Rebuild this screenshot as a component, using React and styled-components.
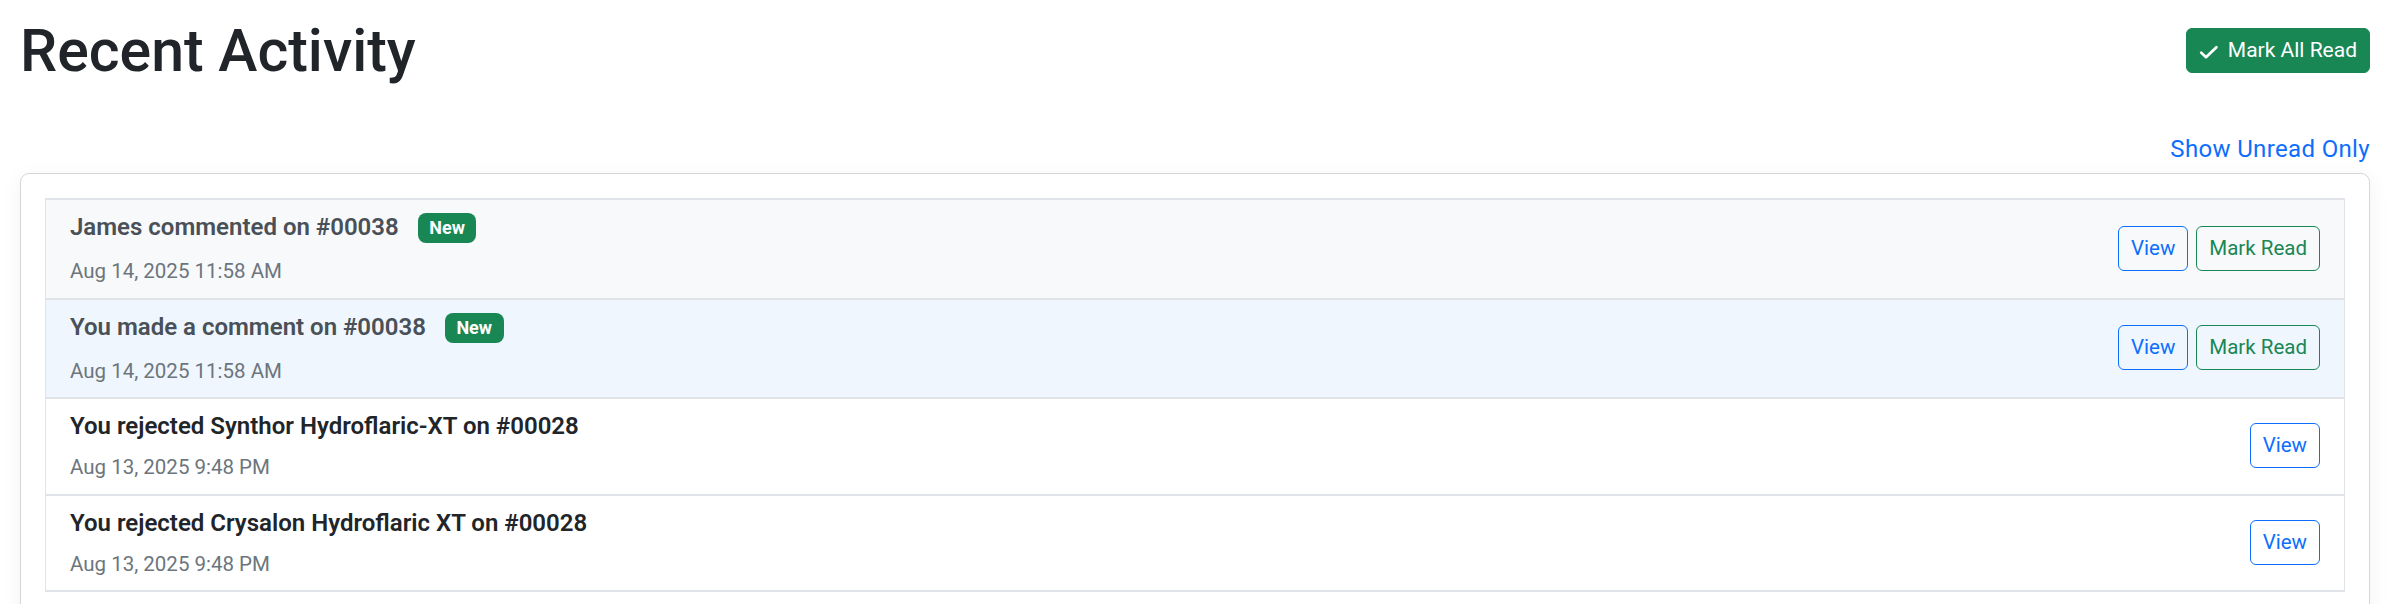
import React from "react";
import styled, { createGlobalStyle } from "styled-components";

const GlobalStyle = createGlobalStyle`
  html, body {
    margin: 0;
    padding: 0;
    background: #ffffff;
  }
  body {
    font-family: Roboto, "Liberation Sans", Arial, sans-serif;
    color: #212529;
    -webkit-font-smoothing: antialiased;
  }
  * { box-sizing: border-box; }
`;

const Page = styled.main`
  padding: 14.5px 36px 0 20px;
`;

const Header = styled.header`
  display: flex;
  align-items: center;
  justify-content: space-between;
  height: 72px;
`;

const Title = styled.h1`
  margin: 0;
  font-size: 59px;
  line-height: 72px;
  font-weight: 500;
  color: #212529;
`;

const SolidButton = styled.button`
  display: inline-flex;
  align-items: center;
  gap: 9px;
  height: 45px;
  padding: 0 12px;
  border: 1px solid #198754;
  border-radius: 6px;
  background: #198754;
  color: #ffffff;
  font-family: inherit;
  font-size: 21px;
  line-height: 31.5px;
  cursor: pointer;

  svg {
    margin-top: 4px;
    flex: none;
  }
`;

const FilterBar = styled.div`
  display: flex;
  justify-content: flex-end;
  margin: 44.5px 0 6px;
`;

const LinkButton = styled.button`
  padding: 0;
  border: 0;
  background: none;
  color: #0d6efd;
  font-family: inherit;
  font-size: 24px;
  line-height: 36px;
  letter-spacing: 0.35px;
  cursor: pointer;
`;

const Card = styled.section`
  border: 1px solid #d6d6d6;
  border-radius: 9px;
  background: #ffffff;
  padding: 24px;
  box-shadow: 0 4px 22px rgba(0, 0, 0, 0.05);
`;

const List = styled.ul`
  list-style: none;
  margin: 0;
  padding: 0;
  border-top: 2px solid #e0e3e7;
`;

const Item = styled.li`
  display: flex;
  align-items: center;
  justify-content: space-between;
  padding: 9px 24px 10px;
  border: 2px solid #e0e3e7;
  border-top: 0;
  border-left-width: 1px;
  border-right-width: 1px;
  background: ${(p) => (p.$tone === "seen" ? "#f8f9fa" : p.$tone === "fresh" ? "#eff6fe" : "#ffffff")};
`;

const Body = styled.div`
  display: flex;
  flex-direction: column;
`;

const Subject = styled.div`
  display: flex;
  align-items: baseline;
  font-size: 24px;
  line-height: 36px;
  font-weight: 600;
  color: ${(p) => (p.$unread ? "#495057" : "#212529")};
`;

const Badge = styled.span`
  display: inline-block;
  margin-left: 19px;
  padding: 6px 11.5px;
  border-radius: 8px;
  background: #198754;
  color: #ffffff;
  font-size: 18px;
  line-height: 18px;
  font-weight: 700;
  transform: translateY(-1px);
`;

const Stamp = styled.div`
  margin-top: ${(p) => (p.$unread ? "11px" : "8px")};
  font-size: 20.5px;
  line-height: 31.5px;
  color: #6c757d;
`;

const Actions = styled.div`
  display: flex;
  gap: 8px;
  flex: none;
`;

const OutlineButton = styled.button`
  height: 45px;
  padding: 0 12px;
  border: 1px solid ${(p) => (p.$variant === "success" ? "#198754" : "#0d6efd")};
  border-radius: 6px;
  background: transparent;
  color: ${(p) => (p.$variant === "success" ? "#198754" : "#0d6efd")};
  font-family: inherit;
  font-size: 20.5px;
  line-height: 31.5px;
  cursor: pointer;
`;

const CheckIcon = () => (
  <svg width="20" height="20" viewBox="0 0 20 20" aria-hidden="true">
    <polyline
      points="2.2,9.6 7,14.2 17.4,4.2"
      fill="none"
      stroke="currentColor"
      strokeWidth="2.7"
      strokeLinecap="round"
      strokeLinejoin="round"
    />
  </svg>
);

const activity = [
  { id: 1, text: "James commented on #00038", time: "Aug 14, 2025 11:58 AM", unread: true, tone: "seen" },
  { id: 2, text: "You made a comment on #00038", time: "Aug 14, 2025 11:58 AM", unread: true, tone: "fresh" },
  { id: 3, text: "You rejected Synthor Hydroflaric-XT on #00028", time: "Aug 13, 2025 9:48 PM", unread: false },
  { id: 4, text: "You rejected Crysalon Hydroflaric XT on #00028", time: "Aug 13, 2025 9:48 PM", unread: false },
];

export default function App() {
  return (
    <>
      <GlobalStyle />
      <Page>
        <Header>
          <Title>Recent Activity</Title>
          <SolidButton>
            <CheckIcon />
            Mark All Read
          </SolidButton>
        </Header>
        <FilterBar>
          <LinkButton>Show Unread Only</LinkButton>
        </FilterBar>
        <Card>
          <List>
            {activity.map((a) => (
              <Item key={a.id} $tone={a.tone}>
                <Body>
                  <Subject $unread={a.unread}>
                    {a.text}
                    {a.unread && <Badge>New</Badge>}
                  </Subject>
                  <Stamp $unread={a.unread}>{a.time}</Stamp>
                </Body>
                <Actions>
                  <OutlineButton>View</OutlineButton>
                  {a.unread && <OutlineButton $variant="success">Mark Read</OutlineButton>}
                </Actions>
              </Item>
            ))}
          </List>
        </Card>
      </Page>
    </>
  );
}
